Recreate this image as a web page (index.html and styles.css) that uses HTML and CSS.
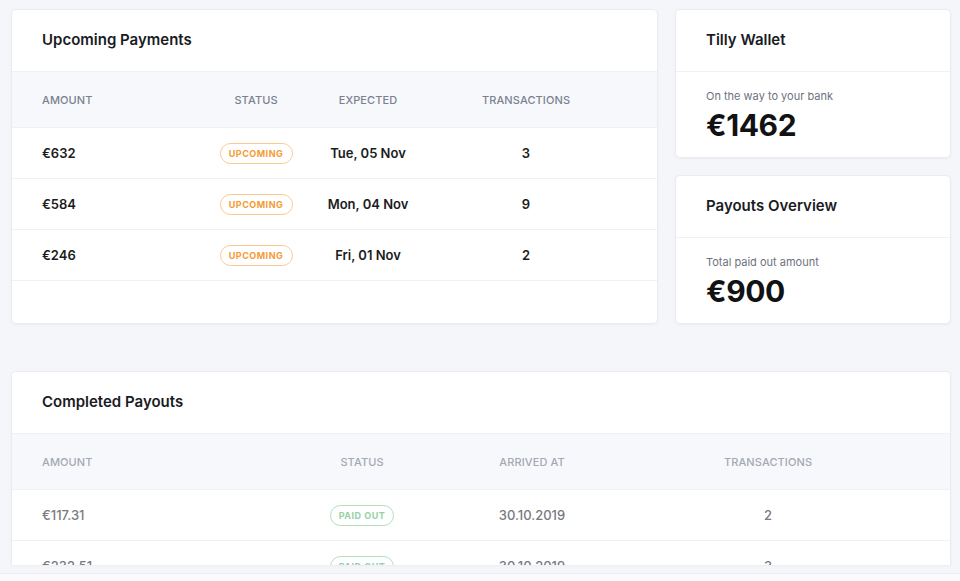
FILE: index.html
```html
<!DOCTYPE html>
<html lang="en">
<head>
<meta charset="utf-8">
<title>Payouts</title>
<link rel="stylesheet" href="styles.css">
</head>
<body>
<div class="page">
  <div class="top">
    <section class="card upcoming">
      <div class="card-head">Upcoming Payments</div>
      <div class="trow thead up-cols">
        <div>AMOUNT</div><div class="c">STATUS</div><div class="c">EXPECTED</div><div class="c">TRANSACTIONS</div>
      </div>
      <div class="trow up-cols">
        <div>€632</div><div class="c"><span class="badge orange">UPCOMING</span></div><div class="c">Tue, 05 Nov</div><div class="c">3</div>
      </div>
      <div class="trow up-cols">
        <div>€584</div><div class="c"><span class="badge orange">UPCOMING</span></div><div class="c">Mon, 04 Nov</div><div class="c">9</div>
      </div>
      <div class="trow up-cols">
        <div>€246</div><div class="c"><span class="badge orange">UPCOMING</span></div><div class="c">Fri, 01 Nov</div><div class="c">2</div>
      </div>
    </section>
    <div class="side">
      <section class="card stat">
        <div class="card-head">Tilly Wallet</div>
        <div class="stat-body">
          <div class="stat-label">On the way to your bank</div>
          <div class="stat-value">€1462</div>
        </div>
      </section>
      <section class="card stat">
        <div class="card-head">Payouts Overview</div>
        <div class="stat-body">
          <div class="stat-label">Total paid out amount</div>
          <div class="stat-value">€900</div>
        </div>
      </section>
    </div>
  </div>
  <section class="card completed">
    <div class="card-head">Completed Payouts</div>
    <div class="trow thead done-cols">
      <div>AMOUNT</div><div class="c">STATUS</div><div class="c">ARRIVED AT</div><div class="c">TRANSACTIONS</div>
    </div>
    <div class="trow done-cols faded">
      <div>€117.31</div><div class="c"><span class="badge green">PAID OUT</span></div><div class="c">30.10.2019</div><div class="c">2</div>
    </div>
    <div class="trow done-cols faded">
      <div>€232.51</div><div class="c"><span class="badge green">PAID OUT</span></div><div class="c">30.10.2019</div><div class="c">3</div>
    </div>
  </section>
</div>
<div class="footer"></div>
</body>
</html>
```

FILE: styles.css
```css
html, body {
  margin: 0;
  padding: 0;
}
body {
  background: #f5f6fa;
  font-family: Inter, "Noto Sans", "Liberation Sans", sans-serif;
  color: #1b1c20;
  width: 960px;
  height: 581px;
  overflow: hidden;
}
.page {
  height: 573px;
  box-sizing: border-box;
  padding: 9px 9px 0 11px;
  overflow: hidden;
  display: flex;
  flex-direction: column;
  gap: 47px;
}
.footer {
  height: 7px;
  background: #fbfbfd;
  border-top: 1px solid #eceef3;
}
.top {
  display: flex;
  gap: 17px;
}
.card {
  background: #fff;
  border: 1px solid #eaecf1;
  border-radius: 5px;
  box-shadow: 0 1px 3px rgba(40, 50, 80, 0.05);
  box-sizing: border-box;
  overflow: hidden;
}
.card-head {
  height: 61px;
  border-bottom: 1px solid #eff1f5;
  display: flex;
  align-items: center;
  padding: 0 30px 2px;
  box-sizing: border-box;
  height: 62px;
  font-size: 15px;
  font-weight: 600;
  letter-spacing: 0;
  color: #1a1b1f;
}
.upcoming {
  width: 647px;
  height: 315px;
}
.side {
  width: 276px;
  display: flex;
  flex-direction: column;
  gap: 17px;
}
.stat {
  height: 149px;
}
.stat-body {
  padding: 17px 30px 0;
}
.stat-label {
  font-size: 11px;
  color: #6d7280;
  line-height: 14px;
}
.stat-value {
  font-size: 30px;
  font-weight: 700;
  line-height: 34px;
  margin-top: 5px;
  letter-spacing: -0.4px;
  color: #111214;
}
.trow {
  display: grid;
  align-items: center;
  height: 51px;
  box-sizing: border-box;
  padding: 0 30px;
  border-bottom: 1px solid #eff1f5;
  font-size: 13px;
  font-weight: 600;
  color: #1b1c20;
}
.trow .c {
  text-align: center;
}
.thead {
  height: 56px;
  background: #f7f8fb;
  font-size: 11px;
  font-weight: 500;
  color: #7b8190;
  letter-spacing: 0.1px;
}
.up-cols {
  grid-template-columns: 158px 112px 112px 204px;
}
.done-cols {
  grid-template-columns: 260px 120px 220px 252px;
}
.completed {
  height: 194px;
  border-bottom: 0;
  border-radius: 5px 5px 0 0;
}
.completed .thead {
  color: #a3a8b4;
}
.faded {
  color: #777a80;
  font-weight: 500;
}
.badge {
  display: inline-block;
  vertical-align: middle;
  border-radius: 12px;
  font-size: 9px;
  font-weight: 700;
  letter-spacing: 0.5px;
  line-height: 19px;
  box-sizing: border-box;
  text-align: center;
}
.orange {
  width: 73px;
  border: 1.5px solid #fdc791;
  color: #f49b35;
}
.green {
  width: 64px;
  border: 1.5px solid #b0dfbb;
  color: #93d2a2;
}
```
